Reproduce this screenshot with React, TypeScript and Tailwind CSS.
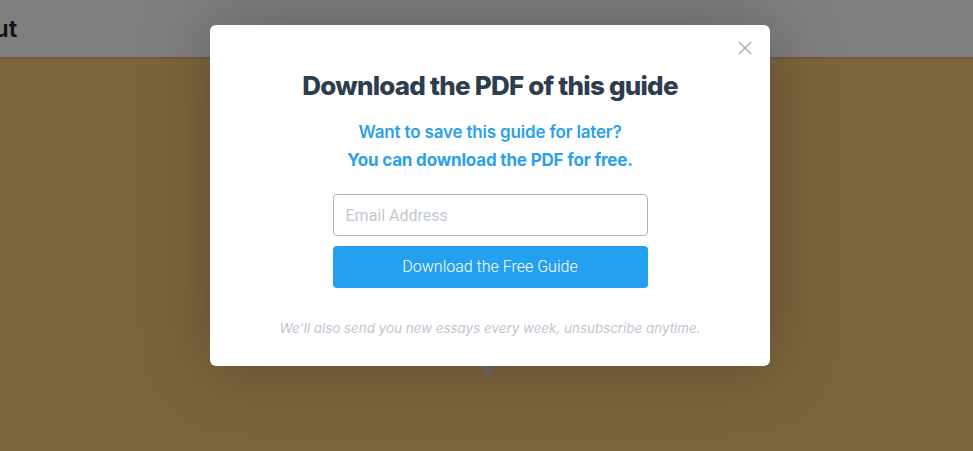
import React from "react";

const CloseIcon = () => (
  <svg width="14" height="14" viewBox="0 0 14 14" fill="none">
    <path d="M1 1L13 13M13 1L1 13" stroke="#a3acb8" strokeWidth="1.4" />
  </svg>
);

const App = () => {
  return (
    <div className="relative h-[451px] w-[973px] overflow-hidden bg-[#f8ca7a] font-['Inter',sans-serif]">
      {/* page behind the dialog */}
      <header className="flex h-[57px] items-center bg-white shadow-[0_1px_2px_rgba(0,0,0,0.15)]">
        <span className="ml-[-53px] text-[24px] font-semibold text-[#1a2330]">About</span>
      </header>
      <section className="flex justify-center pt-[309px]">
        <div className="h-0 w-0 border-x-[7px] border-t-[12px] border-x-transparent border-t-[#dcd6c6]" />
      </section>

      {/* overlay + modal */}
      <div className="absolute inset-0 flex items-start justify-center bg-black/50 pl-[7px] pt-[25px]">
        <div className="relative flex h-[341px] w-[560px] flex-col items-center rounded-[6px] bg-white shadow-[0_0_70px_rgba(0,0,0,0.25)]">
          <button className="absolute right-[17px] top-[15px] p-[1px]">
            <CloseIcon />
          </button>

          <h2 className="mt-[44px] text-[26px] font-extrabold leading-[34px] tracking-[-0.03em] text-[#2e3d4d]">
            Download the PDF of this guide
          </h2>

          <div className="mt-[15px] flex flex-col items-center text-[17px] leading-[28px] tracking-[-0.01em] text-[#2ba1ee]">
            <p className="font-semibold">Want to save this guide for later?</p>
            <p className="font-bold">You can download the PDF for free.</p>
          </div>

          <form className="mt-[20px] flex w-[315px] flex-col gap-[10px] font-['Roboto',sans-serif]">
            <input
              type="email"
              placeholder="Email Address"
              className="h-[42px] w-full rounded-[4px] border border-[#aab6c3] px-[12px] text-[16px] text-[#333] outline-none placeholder:text-[#c3c8d0]"
            />
            <button
              type="submit"
              className="h-[42px] w-full rounded-[4px] bg-[#23a1f0] text-[16px] font-light text-white"
            >
              Download the Free Guide
            </button>
          </form>

          <p className="mt-[30px] text-[13.4px] italic text-[#bfc6cf]">
            We'll also send you new essays every week, unsubscribe anytime.
          </p>
        </div>
      </div>
    </div>
  );
};

export default App;
